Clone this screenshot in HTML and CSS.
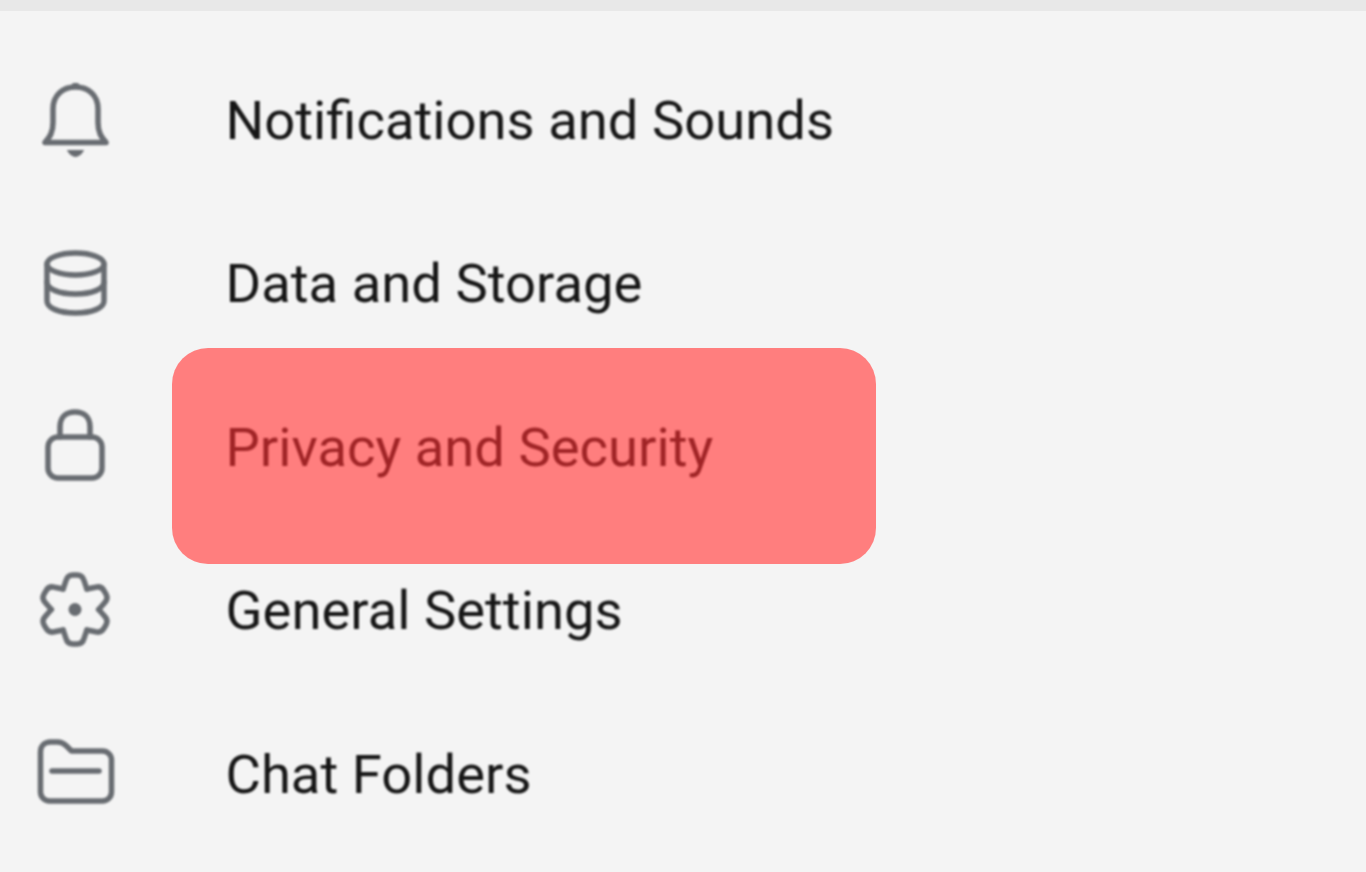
FILE: index.html
```html
<!DOCTYPE html>
<html lang="en">
<head>
<meta charset="utf-8">
<title>Settings</title>
<link rel="stylesheet" href="styles.css">
</head>
<body>
<div class="topbar"></div>
<nav class="menu">
  <div class="highlight"></div>
  <div class="row">
    <svg class="icon" viewBox="0 0 80 80"><path d="M10 62.500H71c-5-6-8-10-8-20V29C63 15 53 7 40.500 7S18 15 18 29v13.500c0 10-3 14-8 20Z"/><path class="solid" d="M33 9l5-6h5l5 6Z"/><path class="solid" d="M8 60h65v5H8Z"/><path class="solid" d="M32 70h17c-1 3-5 7-8.500 7s-7.500-4-8.500-7Z"/></svg>
    <span class="label">Notifications and Sounds</span>
  </div>
  <div class="row">
    <svg class="icon" viewBox="0 0 80 80"><ellipse cx="40.500" cy="21" rx="28.500" ry="11"/><path d="M12 21v37c0 7 12 12 28.500 12S69 65 69 58V21"/><path d="M12 39c0 7 12 12 28.500 12S69 46 69 39"/></svg>
    <span class="label">Data and Storage</span>
  </div>
  <div class="row">
    <svg class="icon" viewBox="0 0 80 80"><rect x="13" y="30" width="54" height="41" rx="10"/><path d="M25 30V20C25 10 31 5 40 5s15 5 15 15v10"/></svg>
    <span class="label label-active">Privacy and Security</span>
  </div>
  <div class="row">
    <svg class="icon" viewBox="0 0 80 80">
      <g transform="translate(40 39.500)">
        <path d="M-11.850-20.500L-9-29Q-7.500-34.500-2-34.500H2Q7.500-34.500 9-29L11.850-20.500"/>
        <path transform="rotate(60)" d="M-11.850-20.500L-9-29Q-7.500-34.500-2-34.500H2Q7.500-34.500 9-29L11.850-20.500"/>
        <path transform="rotate(120)" d="M-11.850-20.500L-9-29Q-7.500-34.500-2-34.500H2Q7.500-34.500 9-29L11.850-20.500"/>
        <path transform="rotate(180)" d="M-11.850-20.500L-9-29Q-7.500-34.500-2-34.500H2Q7.500-34.500 9-29L11.850-20.500"/>
        <path transform="rotate(240)" d="M-11.850-20.500L-9-29Q-7.500-34.500-2-34.500H2Q7.500-34.500 9-29L11.850-20.500"/>
        <path transform="rotate(300)" d="M-11.850-20.500L-9-29Q-7.500-34.500-2-34.500H2Q7.500-34.500 9-29L11.850-20.500"/>
        <circle class="solid" r="6.500"/>
      </g>
    </svg>
    <span class="label">General Settings</span>
  </div>
  <div class="row">
    <svg class="icon" viewBox="0 0 80 80"><path d="M5.500 18c0-6 4-10 10-10h7c4 0 6 1 9 4l5 5h31c5 0 9 4 9 9v32c0 5-4 9-9 9H14.500c-5 0-9-4-9-9Z"/><path d="M17 37h47"/></svg>
    <span class="label">Chat Folders</span>
  </div>
</nav>
</body>
</html>
```
FILE: styles.css
```css
html, body {
  margin: 0;
  height: 100%;
  background: #f4f4f4;
  overflow: hidden;
}
body {
  font-family: Roboto, "Liberation Sans", sans-serif;
  color: #161616;
}
.topbar {
  height: 11px;
  background: #e8e8e8;
}
.menu {
  position: relative;
  padding-top: 27px;
}
.row {
  position: relative;
  display: flex;
  align-items: center;
  height: 163.5px;
  padding-left: 35px;
  gap: 110.5px;
  filter: blur(0.8px);
}
.icon {
  width: 80px;
  height: 80px;
  flex: none;
  fill: none;
  stroke: #686c71;
  stroke-width: 5.5;
  stroke-linejoin: round;
  stroke-linecap: round;
}
.icon .solid {
  fill: #686c71;
  stroke: none;
}
.label {
  font-size: 54.4px;
  line-height: 1;
  position: relative;
  top: 1px;
}
.label-active {
  color: #a02426;
}
.highlight {
  position: absolute;
  left: 172px;
  top: 337px;
  width: 704px;
  height: 216px;
  border-radius: 36px;
  background: #ff7e7e;
}
```
